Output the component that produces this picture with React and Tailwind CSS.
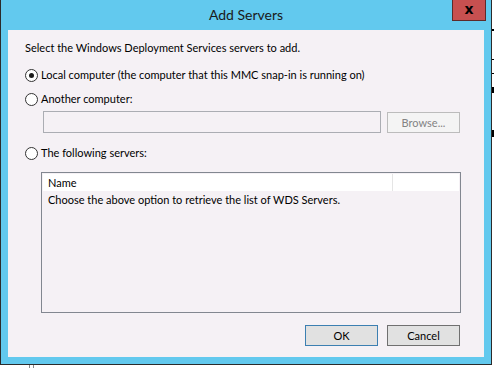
function Radio({ checked, label }) {
  return (
    <div className="flex items-center h-4">
      <span className="w-[13px] h-[13px] rounded-full border border-[#333333] bg-white flex items-center justify-center shrink-0">
        {checked && <span className="w-[5px] h-[5px] rounded-full bg-[#1a1a1a]" />}
      </span>
      <span className="ml-[3px]">{label}</span>
    </div>
  )
}

export default function App() {
  return (
    <div className="w-[494px] h-[368px] bg-white overflow-hidden relative font-['Lato',sans-serif] text-[11px] leading-4 text-black">
      {/* dialog window */}
      <div className="w-[492px] h-[365px] bg-[#62c9ee] border-l border-r border-b border-[#2b2b2b] flex flex-col">
        {/* title bar */}
        <div className="h-[30px] shrink-0 flex items-start relative">
          <div className="flex-1 text-center text-[14px] leading-5 pt-[5px] text-[#1a1a1a]">Add Servers</div>
          <button className="absolute right-[5px] top-0 w-[34px] h-[21px] bg-[#c75050] border border-[#5e2a2a] border-t-0 flex items-center justify-center text-black font-bold text-[14px] leading-none font-['DejaVu_Sans',sans-serif] pb-[2px]">
            x
          </button>
        </div>

        {/* client area */}
        <div className="mx-[7px] h-[327px] bg-[#f5f1f5] pl-[17px] flex flex-col">
          <p className="mt-[10px]">Select the Windows Deployment Services servers to add.</p>

          <div className="mt-[11px]">
            <Radio checked label="Local computer (the computer that this MMC snap-in is running on)" />
          </div>
          <div className="mt-[8px]">
            <Radio label="Another computer:" />
          </div>

          <div className="mt-[4px] ml-[18px] flex items-start">
            <div className="w-[338px] h-[22px] border border-[#abadb3] bg-[#f5f1f5]" />
            <button className="ml-[6px] mt-px w-[73px] h-[21px] border border-[#bcbcbc] bg-[#f4f4f4] text-[#838383]">
              Browse...
            </button>
          </div>

          <div className="mt-[12px]">
            <Radio label="The following servers:" />
          </div>

          {/* server list */}
          <div className="mt-[11px] ml-[16px] w-[420px] h-[141px] border border-[#828790] p-px flex flex-col">
            <div className="h-[17px] bg-white flex">
              <div className="w-[350px] border-r border-[#e5e5e5] pl-[5px] leading-[17px]">Name</div>
              <div className="flex-1" />
            </div>
            <div className="pl-[5px] pt-[1px] leading-4">Choose the above option to retrieve the list of WDS Servers.</div>
          </div>

          {/* buttons */}
          <div className="mt-[12px] mr-[24px] flex justify-end gap-[9px]">
            <button className="w-[73px] h-[21px] border border-[#3c7fb1] bg-[#e1e1e1]">OK</button>
            <button className="w-[73px] h-[21px] border border-[#707070] bg-[#e1e1e1]">Cancel</button>
          </div>
        </div>
      </div>

      {/* bits of the window behind */}
      <div className="absolute left-[492px] top-[29px] w-[2px] h-[2px] bg-black" />
      <div className="absolute left-[492px] top-[59px] w-[2px] h-px bg-black" />
      <div className="absolute left-[492px] top-[73px] w-[2px] h-px bg-black" />
      <div className="absolute left-[492px] top-[87px] w-[2px] h-[6px] bg-black" />
      <div className="absolute left-[492px] top-[130px] w-[2px] h-[7px] bg-black" />
      <div className="absolute left-[29px] top-[365px] w-px h-[3px] bg-[#8a8a8a]" />
      <div className="absolute left-[33px] top-[365px] w-px h-[3px] bg-[#8a8a8a]" />
    </div>
  )
}
